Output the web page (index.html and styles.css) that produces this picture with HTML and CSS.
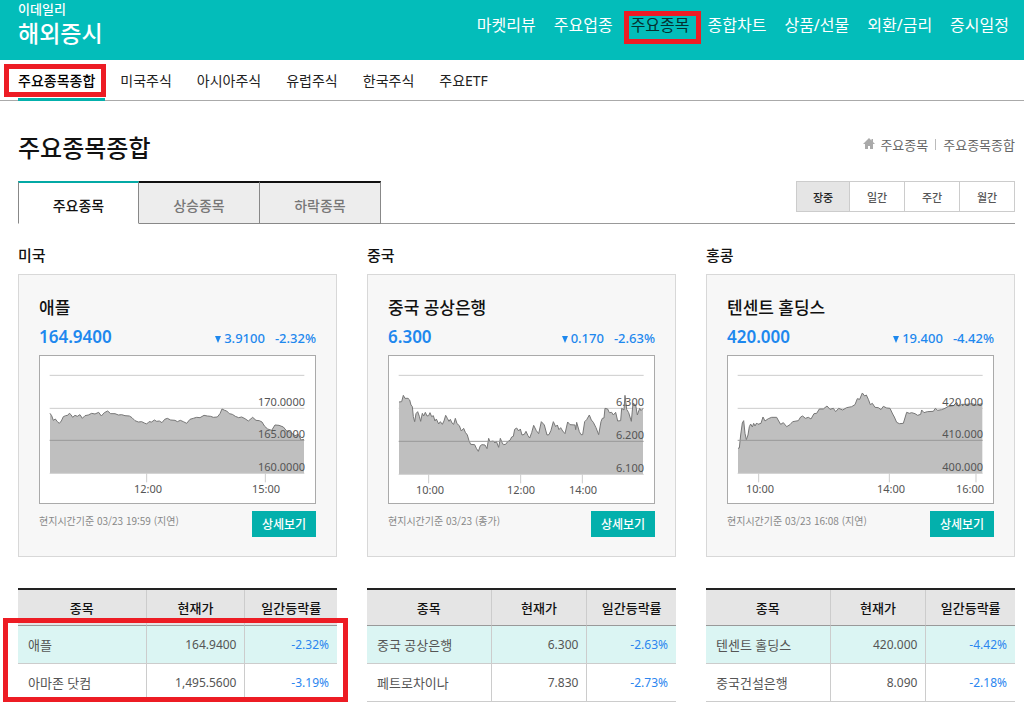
FILE: index.html
```html
<!DOCTYPE html>
<html lang="ko">
<head>
<meta charset="utf-8">
<meta name="viewport" content="width=device-width, initial-scale=1">
<title>이데일리 해외증시 - 주요종목종합</title>
<link rel="stylesheet" href="styles.css">
</head>
<body>
<header class="header">
  <a class="logo" href="#"><span class="logo-small">이데일리</span><span class="logo-big">해외증시</span></a>
  <nav class="main-nav">
    <a href="#">마켓리뷰</a>
    <a href="#">주요업종</a>
    <a class="current marked" href="#">주요종목</a>
    <a href="#">종합차트</a>
    <a href="#">상품/선물</a>
    <a href="#">외환/금리</a>
    <a href="#">증시일정</a>
  </nav>
</header>
<nav class="sub-nav">
  <a class="current marked" href="#">주요종목종합</a>
  <a href="#">미국주식</a>
  <a href="#">아시아주식</a>
  <a href="#">유럽주식</a>
  <a href="#">한국주식</a>
  <a href="#">주요ETF</a>
</nav>
<main class="page">
  <div class="title-row">
    <h1>주요종목종합</h1>
    <div class="breadcrumb">
      <svg class="home" viewBox="0 0 12 12" width="12" height="12" aria-hidden="true"><path d="M6 0 0 6h2v5h3V8h2v3h3V6h2L10 4V1H8.500v1.500z" fill="#aaa"/></svg>
      <a href="#">주요종목</a><span class="bar"></span><a href="#">주요종목종합</a>
    </div>
  </div>
  <div class="tab-row">
    <div class="tabs">
      <button class="tab active" type="button">주요종목</button>
      <button class="tab" type="button">상승종목</button>
      <button class="tab" type="button">하락종목</button>
    </div>
    <div class="periods">
      <button class="active" type="button">장중</button>
      <button type="button">일간</button>
      <button type="button">주간</button>
      <button type="button">월간</button>
    </div>
  </div>

  <div class="markets">
    <section class="market">
      <h2>미국</h2>
      <article class="card">
        <h3>애플</h3>
        <div class="quote"><strong>164.9400</strong><span class="change"><span class="down"></span>3.9100</span><span class="rate">-2.32%</span></div>
        <svg class="chart" viewBox="0 0 275 147">
          <g transform="scale(.33333) translate(-120 -33)">
            <path class="grid" d="M149 91H913M149 190H913"/>
            <path class="area" d="M150 384V205L155 212 160 226 166 222 172 230 178 235 184 228 190 215 197 212 203 211 208 205 213 209 218 217 225 211 232 214 240 209 247 220 255 212 265 210 275 205 285 207 296 202 304 213 313 203 323 198 332 206 345 206 355 210 365 209 375 212 388 213 396 218 405 227 415 231 425 230 433 234 440 237 447 230 455 231 463 225 470 229 478 228 486 233 494 223 502 220 512 225 525 226 532 230 541 226 550 230 560 235 570 223 580 220 590 217 600 218 612 211 622 213 632 214 640 217 652 216 660 206 666 192 674 196 680 198 688 206 697 208 706 214 716 218 725 216 735 221 745 228 758 217 768 226 778 227 786 231 794 244 803 252 815 256 825 240 837 241 850 246 860 258 872 262 885 272 895 268 903 285 912 283V384z"/>
            <path class="line" d="M150 205L155 212 160 226 166 222 172 230 178 235 184 228 190 215 197 212 203 211 208 205 213 209 218 217 225 211 232 214 240 209 247 220 255 212 265 210 275 205 285 207 296 202 304 213 313 203 323 198 332 206 345 206 355 210 365 209 375 212 388 213 396 218 405 227 415 231 425 230 433 234 440 237 447 230 455 231 463 225 470 229 478 228 486 233 494 223 502 220 512 225 525 226 532 230 541 226 550 230 560 235 570 223 580 220 590 217 600 218 612 211 622 213 632 214 640 217 652 216 660 206 666 192 674 196 680 198 688 206 697 208 706 214 716 218 725 216 735 221 745 228 758 217 768 226 778 227 786 231 794 244 803 252 815 256 825 240 837 241 850 246 860 258 872 262 885 272 895 268 903 285 912 283"/>
            <path class="level" d="M149 286H913"/>
            <path class="grid" d="M149 385H913M440 385V412M796 385V412"/>
          </g>
          <text class="value" x="265" y="50">170.0000</text>
          <text class="value" x="265" y="82">165.0000</text>
          <text class="value" x="265" y="115">160.0000</text>
          <text class="time" x="108" y="137">12:00</text>
          <text class="time" x="226" y="137">15:00</text>
        </svg>
        <footer><small>현지시간기준 03/23 19:59 (지연)</small><button type="button">상세보기</button></footer>
      </article>
      <table class="stocks marked">
        <thead><tr><th>종목</th><th>현재가</th><th>일간등락률</th></tr></thead>
        <tbody>
          <tr class="selected"><td>애플</td><td>164.9400</td><td>-2.32%</td></tr>
          <tr><td>아마존 닷컴</td><td>1,495.5600</td><td>-3.19%</td></tr>
        </tbody>
      </table>
    </section>

    <section class="market">
      <h2>중국</h2>
      <article class="card">
        <h3>중국 공상은행</h3>
        <div class="quote"><strong>6.300</strong><span class="change"><span class="down"></span>0.170</span><span class="rate">-2.63%</span></div>
        <svg class="chart" viewBox="0 0 265 147">
          <g transform="scale(.33333) translate(-117 -33)">
            <path class="grid" d="M146 91H881M146 190H881"/>
            <path class="area" d="M147 387V171L155 170 160 151 165 160 174 160 179 165 183 180 187 185 190 215 194 230 198 206 203 200 208 214 212 229 217 205 221 213 226 202 231 213 236 212 240 203 245 215 250 212 255 228 259 222 266 237 271 230 277 238 282 228 287 211 292 220 297 229 301 223 306 234 311 238 316 220 321 236 328 242 334 258 341 250 346 262 352 270 357 287 362 298 374 299 379 310 385 319 391 302 396 299 405 300 411 311 416 280 420 290 430 288 435 294 439 289 446 307 451 280 456 292 460 299 467 298 473 290 480 286 485 276 490 274 494 253 500 249 506 258 511 252 516 270 523 268 528 259 534 272 539 279 545 263 551 241 559 257 566 266 574 230 583 240 591 270 597 269 603 256 610 230 617 245 622 240 627 254 632 248 638 258 645 266 653 231 660 239 675 240 677 254 680 232 688 260 693 269 698 269 704 230 710 224 718 210 724 225 730 232 738 248 746 269 753 230 757 220 762 219 765 190 773 192 778 203 785 202 790 210 797 202 803 228 812 227 815 190 822 195 825 151 830 193 836 203 844 229 849 175 857 180 862 210 869 190 873 197 879 190V387z"/>
            <path class="line" d="M147 171L155 170 160 151 165 160 174 160 179 165 183 180 187 185 190 215 194 230 198 206 203 200 208 214 212 229 217 205 221 213 226 202 231 213 236 212 240 203 245 215 250 212 255 228 259 222 266 237 271 230 277 238 282 228 287 211 292 220 297 229 301 223 306 234 311 238 316 220 321 236 328 242 334 258 341 250 346 262 352 270 357 287 362 298 374 299 379 310 385 319 391 302 396 299 405 300 411 311 416 280 420 290 430 288 435 294 439 289 446 307 451 280 456 292 460 299 467 298 473 290 480 286 485 276 490 274 494 253 500 249 506 258 511 252 516 270 523 268 528 259 534 272 539 279 545 263 551 241 559 257 566 266 574 230 583 240 591 270 597 269 603 256 610 230 617 245 622 240 627 254 632 248 638 258 645 266 653 231 660 239 675 240 677 254 680 232 688 260 693 269 698 269 704 230 710 224 718 210 724 225 730 232 738 248 746 269 753 230 757 220 762 219 765 190 773 192 778 203 785 202 790 210 797 202 803 228 812 227 815 190 822 195 825 151 830 193 836 203 844 229 849 175 857 180 862 210 869 190 873 197 879 190"/>
            <path class="level" d="M146 289H881"/>
            <path class="grid" d="M146 388H881M236 388V415M512 388V415M697 388V415"/>
          </g>
          <text class="value" x="255" y="50">6.300</text>
          <text class="value" x="255" y="83">6.200</text>
          <text class="value" x="255" y="116">6.100</text>
          <text class="time" x="41" y="138">10:00</text>
          <text class="time" x="132" y="138">12:00</text>
          <text class="time" x="194" y="138">14:00</text>
        </svg>
        <footer><small>현지시간기준 03/23 (종가)</small><button type="button">상세보기</button></footer>
      </article>
      <table class="stocks">
        <thead><tr><th>종목</th><th>현재가</th><th>일간등락률</th></tr></thead>
        <tbody>
          <tr class="selected"><td>중국 공상은행</td><td>6.300</td><td>-2.63%</td></tr>
          <tr><td>페트로차이나</td><td>7.830</td><td>-2.73%</td></tr>
        </tbody>
      </table>
    </section>

    <section class="market">
      <h2>홍콩</h2>
      <article class="card">
        <h3>텐센트 홀딩스</h3>
        <div class="quote"><strong>420.000</strong><span class="change"><span class="down"></span>19.400</span><span class="rate">-4.42%</span></div>
        <svg class="chart" viewBox="0 0 265 147">
          <g transform="scale(.33333) translate(-114 -33)">
            <path class="grid" d="M143 91H878M143 190H878"/>
            <path class="area" d="M144 384V310L148 309 152 270 157 234 161 227 165 265 169 284 174 270 178 245 182 237 187 246 191 235 195 243 200 234 204 238 213 235 219 216 225 228 235 221 245 217 260 217 266 228 272 238 280 233 290 245 300 239 308 230 325 227 332 216 338 213 346 220 355 217 363 222 372 206 380 205 388 192 400 192 411 183 420 193 430 190 437 200 446 190 458 195 470 188 485 185 495 179 502 161 509 163 517 144 524 153 529 150 535 163 541 179 547 175 555 187 565 188 573 194 580 184 590 189 600 190 608 207 613 216 620 232 628 236 640 235 650 202 658 205 665 203 675 206 683 211 692 208 695 195 702 203 712 200 730 199 736 190 743 196 755 194 765 190 775 184 790 182 800 172 806 184 815 178 830 178 845 176 860 180 877 176V384z"/>
            <path class="line" d="M144 310L148 309 152 270 157 234 161 227 165 265 169 284 174 270 178 245 182 237 187 246 191 235 195 243 200 234 204 238 213 235 219 216 225 228 235 221 245 217 260 217 266 228 272 238 280 233 290 245 300 239 308 230 325 227 332 216 338 213 346 220 355 217 363 222 372 206 380 205 388 192 400 192 411 183 420 193 430 190 437 200 446 190 458 195 470 188 485 185 495 179 502 161 509 163 517 144 524 153 529 150 535 163 541 179 547 175 555 187 565 188 573 194 580 184 590 189 600 190 608 207 613 216 620 232 628 236 640 235 650 202 658 205 665 203 675 206 683 211 692 208 695 195 702 203 712 200 730 199 736 190 743 196 755 194 765 190 775 184 790 182 800 172 806 184 815 178 830 178 845 176 860 180 877 176"/>
            <path class="level" d="M143 286H878"/>
            <path class="grid" d="M143 385H878M206 385V412M598 385V412M858 385V412"/>
          </g>
          <text class="value" x="255" y="50">420.000</text>
          <text class="value" x="255" y="82">410.000</text>
          <text class="value" x="255" y="115">400.000</text>
          <text class="time" x="32" y="137">10:00</text>
          <text class="time" x="163" y="137">14:00</text>
          <text class="time" x="242" y="137">16:00</text>
        </svg>
        <footer><small>현지시간기준 03/23 16:08 (지연)</small><button type="button">상세보기</button></footer>
      </article>
      <table class="stocks">
        <thead><tr><th>종목</th><th>현재가</th><th>일간등락률</th></tr></thead>
        <tbody>
          <tr class="selected"><td>텐센트 홀딩스</td><td>420.000</td><td>-4.42%</td></tr>
          <tr><td>중국건설은행</td><td>8.090</td><td>-2.18%</td></tr>
        </tbody>
      </table>
    </section>
  </div>
</main>
</body>
</html>
```
FILE: styles.css
```css
* { box-sizing: border-box; }
body {
  margin: 0;
  background: #fff;
  color: #111;
  font-family: "Noto Sans", "Noto Sans CJK KR", sans-serif;
  font-size: 14px;
}
a { color: inherit; text-decoration: none; white-space: nowrap; }
h1, h2, h3 { margin: 0; }
button { font-family: inherit; margin: 0; padding: 0; cursor: pointer; white-space: nowrap; }

/* red outline around highlighted items */
.marked { position: relative; }
.marked::after {
  content: "";
  position: absolute;
  border: 5px solid #ed1c24;
  pointer-events: none;
}

.header {
  display: flex;
  justify-content: space-between;
  align-items: flex-start;
  height: 60px;
  padding: 0 15px 0 18px;
  background: #03bdba;
  color: #fff;
}
.logo { display: flex; flex-direction: column; font-weight: 500; }
.logo-small { font-size: 13px; line-height: 18px; }
.logo-big { font-size: 23px; line-height: 30px; }
.main-nav { display: flex; gap: 18px; font-size: 16px; line-height: 24px; padding-top: 13px; }
.main-nav .current { color: #05302f; }
.main-nav .marked::after { inset: -2px -11px -7px -7px; }

.sub-nav {
  display: flex;
  gap: 25px;
  height: 41px;
  padding: 0 18px;
  border-bottom: 1px solid #aaa;
  line-height: 42px;
  color: #222;
}
.sub-nav .current {
  height: 41px;
  padding-right: 10px;
  margin-right: -10px;
  border-bottom: 3px solid #03b0ac;
  color: #000;
  font-weight: 500;
}
.sub-nav .marked::after { inset: 4px -1px 1px -14px; }

.page { padding: 29px 9px 0 18px; }
.title-row { display: flex; justify-content: space-between; }
h1 { font-size: 24px; line-height: 36px; font-weight: 500; }
.breadcrumb {
  display: flex;
  align-items: center;
  height: 28px;
  font-size: 13px;
  color: #666;
}
.home { margin-right: 5px; }
.bar { width: 1px; height: 11px; margin: 0 7px; background: #bbb; }

.tab-row {
  display: flex;
  justify-content: space-between;
  align-items: flex-start;
  height: 43px;
  margin-top: 15px;
  border-bottom: 1px solid #999;
}
.tabs { display: flex; }
.tab {
  width: 121px;
  height: 43px;
  border: solid #888;
  border-width: 2px 1px 1px 0;
  border-top-color: #111;
  background: #ededed;
  color: #777;
  font-size: 14px;
  font-weight: 500;
  padding-top: 4px;
}
.tab.active {
  border-left-width: 1px;
  border-top-color: #03a9a5;
  border-bottom-color: #fff;
  background: #fff;
  color: #111;
}
.periods { display: flex; border: 1px solid #ccc; height: 31px; }
.periods button {
  width: 55px;
  border: 0;
  border-left: 1px solid #ccc;
  background: #fff;
  color: #555;
  font-size: 11px;
  font-weight: 500;
}
.periods button:first-child { width: 52px; border-left: 0; }
.periods .active { background: #e5e5e5; color: #222; }

.markets {
  display: grid;
  grid-template-columns: 319fr 309fr 309fr;
  gap: 30px;
  padding-top: 19px;
}
h2 { font-size: 15px; line-height: 24px; font-weight: 500; }
.card {
  margin-top: 7px;
  padding: 21px 20px 19px;
  border: 1px solid #d8d8d8;
  background: #f7f7f7;
}
h3 { font-size: 17px; line-height: 24px; font-weight: 500; }
.quote {
  display: flex;
  align-items: baseline;
  height: 35px;
  line-height: 33px;
  color: #1e88ee;
  font-size: 13px;
  font-weight: 500;
}
.quote strong { margin-right: auto; font-size: 17px; font-weight: 600; }
.down {
  display: inline-block;
  margin-right: 3px;
  border: solid transparent;
  border-width: 7px 3px 0;
  border-top-color: #1e88ee;
}
.rate { margin-left: 10px; }
.chart {
  display: block;
  width: 100%;
  height: auto;
  border: 1px solid #aaa;
  background: #fff;
}
.chart path { vector-effect: non-scaling-stroke; }
.chart .grid { fill: none; stroke: #ccc; }
.chart .level { fill: none; stroke: #999; }
.chart .area { fill: #bfbfbf; }
.chart .line { fill: none; stroke: #777; }
.chart text { font-size: 11px; fill: #555; }
.value { text-anchor: end; }
.time { text-anchor: middle; }
.card footer {
  display: flex;
  justify-content: space-between;
  align-items: flex-start;
  margin-top: 7px;
}
.card small {
  color: #888;
  font-family: "Noto Sans CJK KR", sans-serif;
  font-size: 10px;
  line-height: 20px;
  white-space: nowrap;
}
.card footer button {
  width: 64px;
  height: 26px;
  border: 0;
  background: #03b0ac;
  color: #fff;
  font-size: 12px;
  font-weight: 500;
}

.stocks {
  width: 100%;
  margin-top: 31px;
  border-collapse: separate;
  border-spacing: 0;
  border-top: 2px solid #222;
  table-layout: fixed;
  font-size: 13px;
  line-height: 20px;
}
.stocks th {
  height: 36px;
  padding: 0;
  border-bottom: 1px solid #999;
  background: #e5e5e5;
  font-weight: 500;
}
.stocks td {
  height: 38px;
  padding: 0 8px;
  border-bottom: 1px solid #ccc;
  color: #555;
  font-size: 12px;
  text-align: right;
}
.stocks th + th, .stocks td + td { border-left: 1px solid #ccc; }
.stocks th:first-child { width: 40%; }
.stocks th:nth-child(2) { width: 31%; }
.stocks td:first-child { padding-left: 10px; font-size: 13px; text-align: left; }
.stocks td:last-child { color: #2b86ef; }
.selected { background: #dbf5f3; }
.stocks.marked::after { inset: 28px -11px 0 -15px; }
```
